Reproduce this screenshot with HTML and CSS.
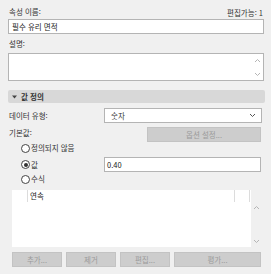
FILE: index.html
```
<!DOCTYPE html>
<html lang="ko">
<head>
    <meta charset="UTF-8">
    <title>속성</title>
    <link rel="stylesheet" href="styles.css">
</head>
<body>
    <div class="panel">
        <div class="top-row">
            <span class="lbl">속성 이름:</span>
            <span class="editable">편집가능: 1</span>
        </div>
        <div class="field name-field">필수 유리 면적</div>

        <div class="lbl desc-lbl">설명:</div>
        <div class="field desc-field">
            <div class="mini-scroll">
                <svg width="7" height="5" viewBox="0 0 7 5"><path d="M1 4 L3.5 1.5 L6 4" fill="none" stroke="#b5b5b5" stroke-width="1"/></svg>
                <svg width="7" height="5" viewBox="0 0 7 5"><path d="M1 1 L3.5 3.5 L6 1" fill="none" stroke="#b5b5b5" stroke-width="1"/></svg>
            </div>
        </div>

        <div class="section">
            <svg width="5" height="4" viewBox="0 0 5 4"><path d="M0 0.5 L5 0.5 L2.5 3.5 Z" fill="#444"/></svg>
            <span>값 정의</span>
        </div>

        <div class="form-row type-row">
            <span class="lbl">데이터 유형:</span>
            <div class="field select">
                <span>숫자</span>
                <svg width="7" height="5" viewBox="0 0 7 5"><path d="M1 1 L3.5 3.5 L6 1" fill="none" stroke="#555" stroke-width="1"/></svg>
            </div>
        </div>

        <div class="form-row default-row">
            <span class="lbl">기본값:</span>
            <div class="btn options-btn">옵션 설정...</div>
        </div>

        <div class="radio-row r1">
            <span class="radio"></span><span class="lbl">정의되지 않음</span>
        </div>
        <div class="radio-row r2">
            <span class="radio checked"></span><span class="lbl">값</span>
            <div class="field value-field">0.40</div>
        </div>
        <div class="radio-row r3">
            <span class="radio"></span><span class="lbl">수식</span>
        </div>

        <div class="list-wrap">
            <div class="list">
                <div class="list-head">
                    <span class="col-a"></span>
                    <span class="col-b">연속</span>
                    <span class="col-c"></span>
                    <span class="col-d"></span>
                </div>
            </div>
            <div class="list-scroll">
                <svg width="7" height="5" viewBox="0 0 7 5"><path d="M1 4 L3.5 1.5 L6 4" fill="none" stroke="#b5b5b5" stroke-width="1"/></svg>
                <svg width="7" height="5" viewBox="0 0 7 5"><path d="M1 1 L3.5 3.5 L6 1" fill="none" stroke="#b5b5b5" stroke-width="1"/></svg>
            </div>
        </div>

        <div class="btn-row">
            <div class="btn small">추가...</div>
            <div class="btn small">제거</div>
            <div class="btn small">편집...</div>
            <div class="btn wide">평가...</div>
        </div>
    </div>
</body>
</html>
```

FILE: styles.css
```
body {
    margin: 0;
    background-color: #f0f0f0;
    font-family: "Noto Sans CJK KR", "Noto Sans", sans-serif;
    font-size: 7.5px;
    color: #333;
}
.panel {
    display: flex;
    flex-direction: column;
    padding: 0 7px 0 8px;
    width: 271px;
    height: 274px;
    box-sizing: border-box;
}
.lbl {
    line-height: 10px;
    white-space: nowrap;
}
.top-row {
    display: flex;
    justify-content: space-between;
    height: 10px;
    margin-top: 7px;
    padding: 0 1px;
}
.field {
    background-color: white;
    border: 1px solid #b4b4b4;
    box-sizing: border-box;
}
.name-field {
    height: 15px;
    margin-top: 2px;
    padding-left: 3px;
    line-height: 13px;
    color: #222;
}
.desc-lbl {
    height: 10px;
    margin-top: 5px;
    padding-left: 1px;
}
.desc-field {
    height: 28px;
    margin-top: 4px;
    display: flex;
    justify-content: flex-end;
}
.mini-scroll {
    width: 12px;
    display: flex;
    flex-direction: column;
    justify-content: space-between;
    align-items: center;
    padding: 4px 0 3px;
}
.section {
    height: 13px;
    margin: 9px -1px 0 0;
    background-color: #d8d8d8;
    border-radius: 2px;
    display: flex;
    align-items: center;
    gap: 4px;
    padding-left: 4px;
    font-weight: bold;
    color: #333;
}
.form-row {
    display: flex;
    align-items: center;
    padding-left: 1px;
}
.type-row {
    height: 15px;
    margin-top: 5px;
}
.select {
    margin-left: auto;
    width: 158px;
    height: 15px;
    margin-right: 2px;
    display: flex;
    align-items: center;
    justify-content: space-between;
    padding: 0 5px 0 6px;
}
.default-row {
    height: 15px;
    margin-top: 4px;
    align-items: flex-start;
}
.default-row .lbl {
    padding-top: 1px;
}
.btn {
    background-color: #cdcdcd;
    border: 1px solid #c3c3c3;
    box-sizing: border-box;
    color: #9b9b9b;
    text-align: center;
    line-height: 13px;
    height: 15px;
}
.options-btn {
    margin-left: auto;
    margin-right: 3px;
    width: 114px;
}
.radio-row {
    display: flex;
    align-items: center;
    padding-left: 13px;
}
.r1 {
    height: 10px;
    margin-top: 1px;
}
.r2 {
    height: 15px;
    margin-top: 4px;
}
.r3 {
    height: 10px;
    margin-top: 2px;
}
.radio {
    width: 9px;
    height: 9px;
    border: 1px solid #444;
    border-radius: 50%;
    box-sizing: border-box;
    background-color: white;
    margin-right: 1px;
    position: relative;
}
.radio.checked::after {
    content: "";
    position: absolute;
    left: 1.5px;
    top: 1.5px;
    width: 4px;
    height: 4px;
    border-radius: 50%;
    background-color: #333;
}
.value-field {
    margin-left: auto;
    margin-right: 3px;
    width: 157px;
    height: 15px;
    line-height: 13px;
    padding-left: 2px;
    color: #222;
}
.list-wrap {
    display: flex;
    height: 57px;
    margin: 6px 2px 0 4px;
}
.list {
    flex: 1;
    background-color: white;
}
.list-head {
    display: flex;
    height: 12px;
}
.list-head span {
    border-right: 1px solid #dcdcdc;
    line-height: 12px;
}
.col-a {
    width: 15px;
}
.col-b {
    flex: 1;
    padding-left: 2px;
    color: #222;
}
.col-c {
    width: 14px;
}
.col-d {
    width: 1px;
    border-right: none !important;
}
.list-scroll {
    width: 11px;
    display: flex;
    flex-direction: column;
    justify-content: space-between;
    align-items: center;
    padding: 15px 0 3px;
}
.btn-row {
    display: flex;
    gap: 4px;
    margin: 5px 3px 0 4px;
}
.btn.small {
    width: 50px;
}
.btn.wide {
    flex: 1;
}
```
